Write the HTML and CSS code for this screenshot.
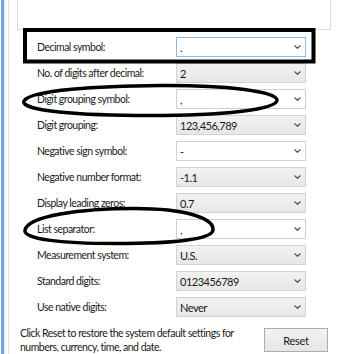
FILE: index.html
```html
<!DOCTYPE html>
<html lang="en">
<head>
<meta charset="utf-8">
<title>Customize Format - Numbers</title>
<link rel="stylesheet" href="styles.css">
</head>
<body>
<div class="window">
  <div class="edge">
    <span class="edge-blue"></span>
    <span class="edge-light"></span>
    <span class="edge-white"></span>
    <span class="edge-line"></span>
  </div>
  <div class="main">
    <div class="panel-top"></div>
    <div class="form">
      <span class="lbl">Decimal symbol:</span>
      <div class="combo edit focus"><span class="val">.</span><svg class="chev" viewBox="0 0 7 4"><polyline points="0.5,0.5 3.5,3.3 6.5,0.5"/></svg></div>

      <span class="lbl">No. of digits after decimal:</span>
      <div class="combo"><span class="val">2</span><svg class="chev" viewBox="0 0 7 4"><polyline points="0.5,0.5 3.5,3.3 6.5,0.5"/></svg></div>

      <span class="lbl">Digit grouping symbol:</span>
      <div class="combo edit"><span class="val">,</span><svg class="chev" viewBox="0 0 7 4"><polyline points="0.5,0.5 3.5,3.3 6.5,0.5"/></svg></div>

      <span class="lbl">Digit grouping:</span>
      <div class="combo"><span class="val">123,456,789</span><svg class="chev" viewBox="0 0 7 4"><polyline points="0.5,0.5 3.5,3.3 6.5,0.5"/></svg></div>

      <span class="lbl">Negative sign symbol:</span>
      <div class="combo edit"><span class="val">-</span><svg class="chev" viewBox="0 0 7 4"><polyline points="0.5,0.5 3.5,3.3 6.5,0.5"/></svg></div>

      <span class="lbl">Negative number format:</span>
      <div class="combo"><span class="val">-1.1</span><svg class="chev" viewBox="0 0 7 4"><polyline points="0.5,0.5 3.5,3.3 6.5,0.5"/></svg></div>

      <span class="lbl">Display leading zeros:</span>
      <div class="combo"><span class="val">0.7</span><svg class="chev" viewBox="0 0 7 4"><polyline points="0.5,0.5 3.5,3.3 6.5,0.5"/></svg></div>

      <span class="lbl">List separator:</span>
      <div class="combo edit"><span class="val">,</span><svg class="chev" viewBox="0 0 7 4"><polyline points="0.5,0.5 3.5,3.3 6.5,0.5"/></svg></div>

      <span class="lbl">Measurement system:</span>
      <div class="combo"><span class="val">U.S.</span><svg class="chev" viewBox="0 0 7 4"><polyline points="0.5,0.5 3.5,3.3 6.5,0.5"/></svg></div>

      <span class="lbl">Standard digits:</span>
      <div class="combo"><span class="val">0123456789</span><svg class="chev" viewBox="0 0 7 4"><polyline points="0.5,0.5 3.5,3.3 6.5,0.5"/></svg></div>

      <span class="lbl">Use native digits:</span>
      <div class="combo"><span class="val">Never</span><svg class="chev" viewBox="0 0 7 4"><polyline points="0.5,0.5 3.5,3.3 6.5,0.5"/></svg></div>
    </div>
    <div class="footer">
      <p class="note">Click Reset to restore the system default settings for numbers, currency, time, and date.</p>
      <button class="btn" type="button">Reset</button>
    </div>
  </div>
  <svg class="marks" viewBox="0 0 338 354" width="338" height="354">
    <rect x="25" y="30" width="288.5" height="31.5" fill="none" stroke="#000" stroke-width="4"/>
    <path d="M24 101 C 30 90, 100 86, 160 85.5 C 225 85, 276 91, 277 100 C 278 110, 220 115.5, 150 115.5 C 80 115.5, 20 111, 24 101 Z" fill="none" stroke="#000" stroke-width="3.5"/>
    <path d="M25 230 C 28 216, 80 208.5, 135 208.5 C 185 208.5, 214 218, 213 230 C 212 240, 170 243.5, 115 243.5 C 60 243.5, 23 239, 25 230 Z" fill="none" stroke="#000" stroke-width="3.5"/>
  </svg>
</div>
</body>
</html>
```

FILE: styles.css
```css
html, body {
  margin: 0;
  padding: 0;
  background: #ffffff;
}

body {
  width: 338px;
  height: 354px;
  overflow: hidden;
  font-family: Lato, "Noto Sans", "Liberation Sans", sans-serif;
  font-size: 10.5px;
  letter-spacing: -0.5px;
  color: #1a1a1a;
}

.window {
  position: relative;
  display: flex;
  width: 338px;
  height: 354px;
}

.edge {
  display: flex;
  flex: none;
}

.edge-blue {
  width: 3px;
  margin-left: 1px;
  background: #6fa3e2;
}

.edge-light {
  width: 2px;
  background: #ececec;
}

.edge-white {
  width: 2px;
  background: #ffffff;
}

.edge-line {
  width: 1px;
  background: #dedede;
}

.main {
  flex: 1;
  display: flex;
  flex-direction: column;
}

.panel-top {
  box-sizing: border-box;
  margin-left: 8px;
  width: 314px;
  height: 31px;
  border: 1px solid #dcdcdc;
  border-top: none;
}

.form {
  display: grid;
  grid-template-columns: 139px 130px;
  grid-auto-rows: 20px;
  row-gap: 6px;
  margin-top: 7px;
  padding-left: 28px;
}

.lbl {
  display: flex;
  align-items: center;
  white-space: nowrap;
}

.combo {
  box-sizing: border-box;
  display: flex;
  align-items: center;
  justify-content: space-between;
  padding: 0 4px 0 3px;
  border: 1px solid #d2d2d2;
  background: linear-gradient(#f2f2f2, #e7e7e7);
}

.combo.edit {
  background: #ffffff;
  border-color: #cfcfcf;
}

.combo.focus {
  border-color: #86b9ec;
}

.val {
  font-size: 11px;
  color: #1a1a1a;
}

.chev {
  width: 7px;
  height: 4px;
  fill: none;
  stroke: #555555;
  stroke-width: 1.2;
}

.footer {
  display: flex;
  align-items: flex-start;
  margin-top: 9px;
  padding: 0 10px 0 11px;
}

.note {
  margin: 0;
  width: 228px;
  line-height: 14px;
}

.btn {
  box-sizing: border-box;
  margin: 2px 0 0 auto;
  width: 64px;
  height: 24px;
  padding: 0;
  border: 1px solid #acacac;
  background: linear-gradient(#f2f2f2, #e5e5e5);
  font-family: inherit;
  font-size: 11px;
  letter-spacing: -0.3px;
  color: #1a1a1a;
}

.marks {
  position: absolute;
  top: 0;
  left: 0;
  pointer-events: none;
}
```
